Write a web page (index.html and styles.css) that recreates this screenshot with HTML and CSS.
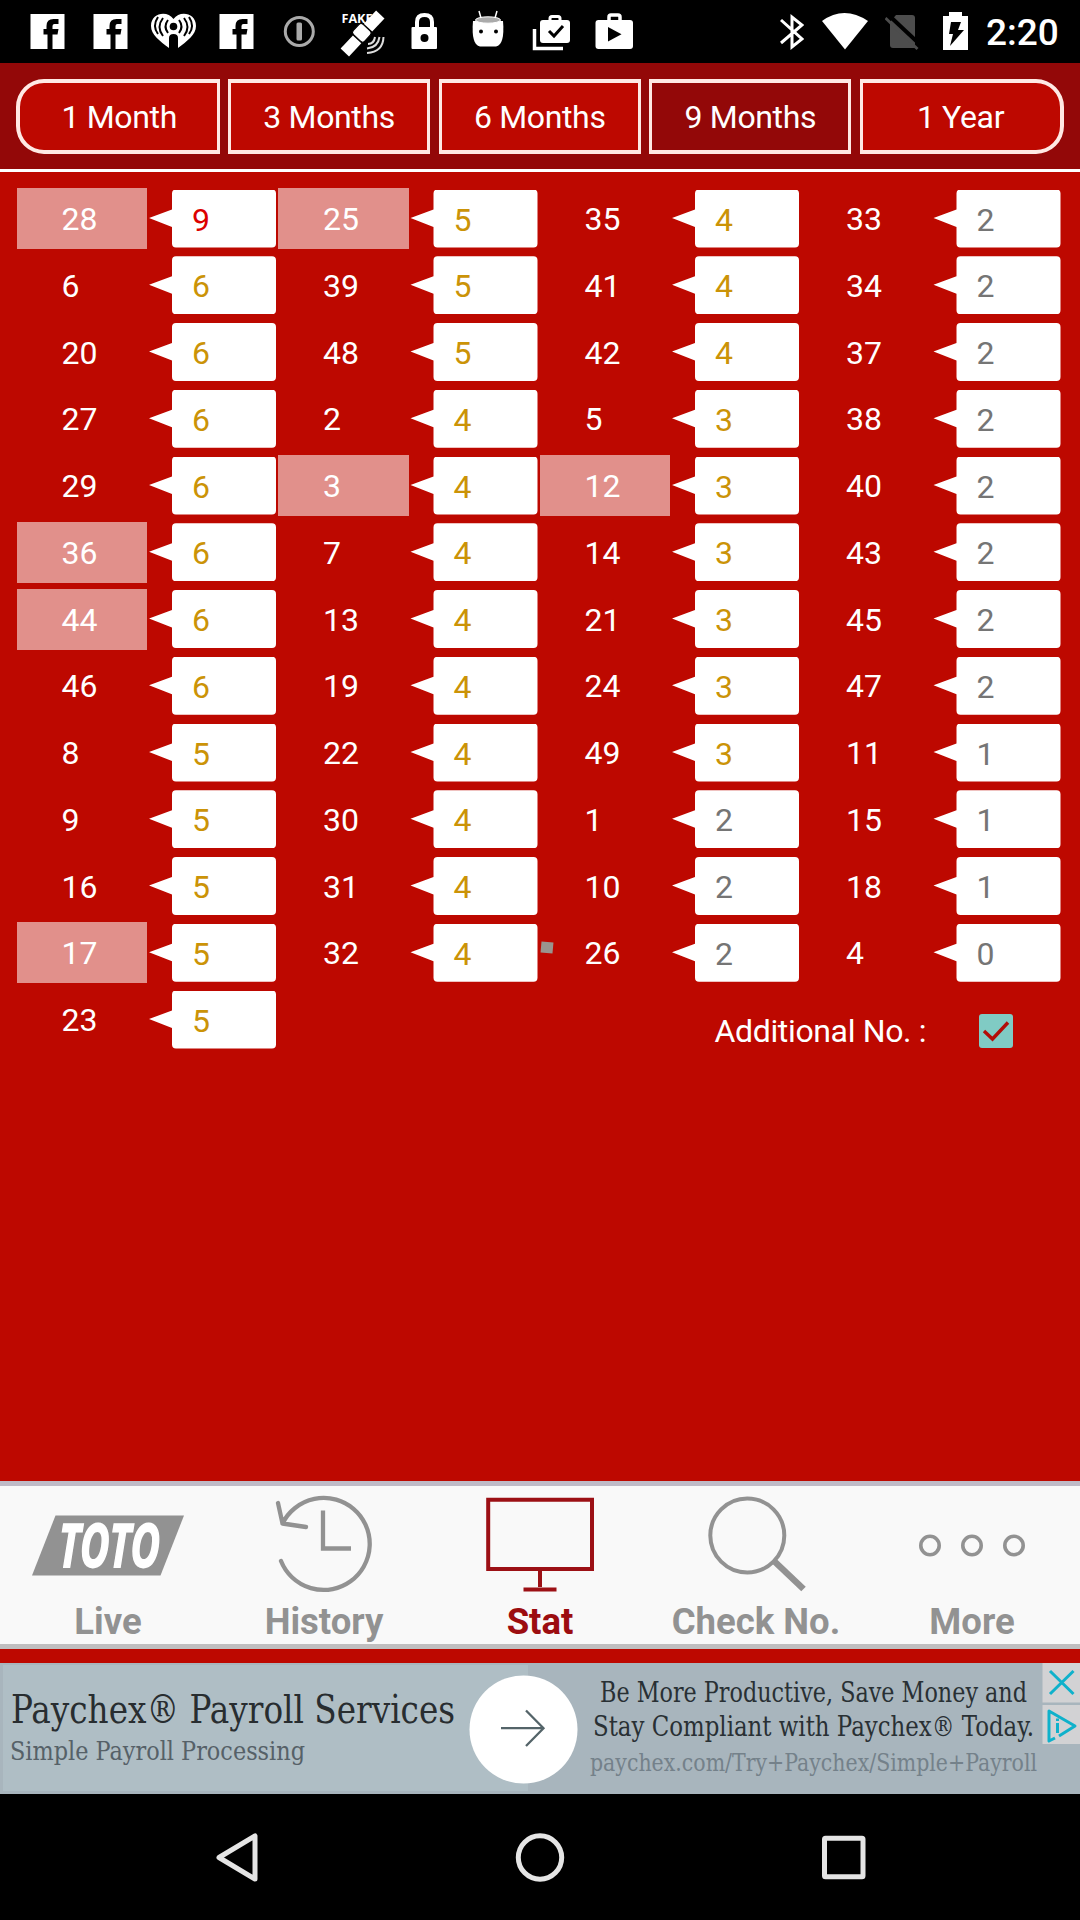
FILE: index.html
```html
<!DOCTYPE html>
<html lang="en">
<head>
<meta charset="utf-8">
<title>TOTO Statistics</title>
<link rel="stylesheet" href="styles.css">
</head>
<body>
<header class="status">
  <svg class="note" viewBox="0 0 63 63"><path fill="#fff" d="M14.500 14h34v35h-12V34.500h5l1-5.500h-6v-3q0-2 2-2h4v-5h-5q-7 0-7 7v3h-3v5.500h4V49h-17z"/></svg>
  <svg class="note" viewBox="0 0 63 63"><path fill="#fff" d="M14.500 14h34v35h-12V34.500h5l1-5.500h-6v-3q0-2 2-2h4v-5h-5q-7 0-7 7v3h-3v5.500h4V49h-17z"/></svg>
  <svg class="note" viewBox="0 0 63 63"><path fill="#fff" d="M27 48C18 41 9 35 9 26 9 13 25 10 31.500 19 38 10 54 13 54 26c0 9-9 15-18 22V38q0-4-4.500-4T27 38z"/><circle cx="31.500" cy="26.500" r="3.800"/><g fill="none" stroke="#000" stroke-width="2"><path d="M26 20q-5 6.500 0 13M21 18q-7 9 0 18M16 17q-6 9 0 17M37 20q5 6.500 0 13M42 18q7 9 0 18M47 17q6 9 0 17"/></g></svg>
  <svg class="note" viewBox="0 0 63 63"><path fill="#fff" d="M14.500 14h34v35h-12V34.500h5l1-5.500h-6v-3q0-2 2-2h4v-5h-5q-7 0-7 7v3h-3v5.500h4V49h-17z"/></svg>
  <svg class="note" viewBox="0 0 63 63"><circle cx="31.300" cy="31.500" r="14" fill="none" stroke="#aaa" stroke-width="3"/><rect x="28.500" y="22.500" width="5.500" height="18" rx="1.500" fill="#aaa"/></svg>
  <svg class="note" viewBox="0 0 63 63"><text x="10.500" y="23" class="fake" textLength="31" lengthAdjust="spacingAndGlyphs">FAKE</text><g transform="rotate(-47 31 33)" fill="#fff"><rect x="5" y="28" width="18" height="11.500"/><rect x="24" y="25" width="14" height="15.500" rx="3" stroke="#000"/><rect x="39" y="28" width="18" height="11.500"/></g><path d="M37 44q6 0 7-7M36 48.500q11-1 12.500-11.500M36 53q16-1 16.500-16" fill="none" stroke="#ddd" stroke-width="2"/></svg>
  <svg class="note" viewBox="0 0 63 63"><rect x="17.500" y="27" width="25.500" height="22" rx="1" fill="#fff"/><path d="M23 28v-6q0-7 7.500-7t7.500 7v6" fill="none" stroke="#fff" stroke-width="4"/><circle cx="30.500" cy="38" r="4"/></svg>
  <svg class="note" viewBox="0 0 63 63"><path d="M16 21h30q2 24-7 25.500H23Q14 45 16 21z" fill="#fff"/><ellipse cx="31" cy="20" rx="12.500" ry="3.200" fill="#aaa" stroke="#fff"/><path d="M22 11l2 7M40 11l-2 7" stroke="#fff" stroke-width="1.500"/><circle cx="24" cy="31.500" r="2"/><circle cx="39" cy="31.500" r="2"/></svg>
  <svg class="note" viewBox="0 0 63 63"><path d="M14.500 29v19.500H43" fill="none" stroke="#fff" stroke-width="3.500"/><rect x="20" y="20" width="30" height="23" rx="3" fill="#fff"/><path d="M30 21v-2.500q0-2 2-2h6q2 0 2 2V21" fill="none" stroke="#fff" stroke-width="3"/><path d="M29 31l5 5 9-10" fill="none" stroke="#000" stroke-width="3"/></svg>
  <svg class="note" viewBox="0 0 63 63"><rect x="12.500" y="20" width="37.500" height="29" rx="3" fill="#fff"/><path d="M26 21v-4q0-2 2-2h7q2 0 2 2v4" fill="none" stroke="#fff" stroke-width="3.500"/><path d="M25 27v14.500l13.500-7.300z"/></svg>
  <div class="system">
    <svg width="24" height="63" viewBox="0 0 24 63"><path d="M1 20l21 19-10 8V17l10 8L1 43" fill="none" stroke="#fff" stroke-width="3"/></svg>
    <svg width="46" height="63" viewBox="0 0 46 63"><path d="M0 21Q22 5 46 21L23 49.500z" fill="#fff"/></svg>
    <svg width="35" height="63" viewBox="0 0 35 63"><path d="M11 15h16q3 0 3 3v30H8q-3 0-3-3V22z" fill="#4d4d4d"/><path d="M3.500 15l33 31" stroke="#000" stroke-width="4"/><path d="M.500 18l32 31" stroke="#4d4d4d" stroke-width="2.800"/></svg>
    <svg width="25" height="63" viewBox="0 0 25 63"><path d="M0 16h6v-4h13v4h6v34H0z" fill="#fff"/><path d="M8 22h10l-3 8h6L7 46l3-12H6z"/></svg>
    <span class="clock">2:20</span>
  </div>
</header>

<nav class="periods">
  <a class="period first">1 Month</a>
  <a class="period">3 Months</a>
  <a class="period">6 Months</a>
  <a class="period active">9 Months</a>
  <a class="period last">1 Year</a>
</nav>

<main class="board">
  <div class="col tall">
    <div class="row"><span class="num hit">28</span><span class="count hot">9</span></div>
    <div class="row"><span class="num">6</span><span class="count">6</span></div>
    <div class="row"><span class="num">20</span><span class="count">6</span></div>
    <div class="row"><span class="num">27</span><span class="count">6</span></div>
    <div class="row"><span class="num">29</span><span class="count">6</span></div>
    <div class="row"><span class="num hit">36</span><span class="count">6</span></div>
    <div class="row"><span class="num hit">44</span><span class="count">6</span></div>
    <div class="row"><span class="num">46</span><span class="count">6</span></div>
    <div class="row"><span class="num">8</span><span class="count">5</span></div>
    <div class="row"><span class="num">9</span><span class="count">5</span></div>
    <div class="row"><span class="num">16</span><span class="count">5</span></div>
    <div class="row"><span class="num hit">17</span><span class="count">5</span></div>
    <div class="row"><span class="num">23</span><span class="count">5</span></div>
  </div>
  <div class="col">
    <div class="row"><span class="num hit">25</span><span class="count">5</span></div>
    <div class="row"><span class="num">39</span><span class="count">5</span></div>
    <div class="row"><span class="num">48</span><span class="count">5</span></div>
    <div class="row"><span class="num">2</span><span class="count">4</span></div>
    <div class="row"><span class="num hit">3</span><span class="count">4</span></div>
    <div class="row"><span class="num">7</span><span class="count">4</span></div>
    <div class="row"><span class="num">13</span><span class="count">4</span></div>
    <div class="row"><span class="num">19</span><span class="count">4</span></div>
    <div class="row"><span class="num">22</span><span class="count">4</span></div>
    <div class="row"><span class="num">30</span><span class="count">4</span></div>
    <div class="row"><span class="num">31</span><span class="count">4</span></div>
    <div class="row"><span class="num">32</span><span class="count">4</span></div>
  </div>
  <div class="col">
    <div class="row"><span class="num">35</span><span class="count">4</span></div>
    <div class="row"><span class="num">41</span><span class="count">4</span></div>
    <div class="row"><span class="num">42</span><span class="count">4</span></div>
    <div class="row"><span class="num">5</span><span class="count">3</span></div>
    <div class="row"><span class="num hit">12</span><span class="count">3</span></div>
    <div class="row"><span class="num">14</span><span class="count">3</span></div>
    <div class="row"><span class="num">21</span><span class="count">3</span></div>
    <div class="row"><span class="num">24</span><span class="count">3</span></div>
    <div class="row"><span class="num">49</span><span class="count">3</span></div>
    <div class="row"><span class="num">1</span><span class="count cold">2</span></div>
    <div class="row"><span class="num">10</span><span class="count cold">2</span></div>
    <div class="row"><span class="num marked">26</span><span class="count cold">2</span></div>
  </div>
  <div class="col">
    <div class="row"><span class="num">33</span><span class="count cold">2</span></div>
    <div class="row"><span class="num">34</span><span class="count cold">2</span></div>
    <div class="row"><span class="num">37</span><span class="count cold">2</span></div>
    <div class="row"><span class="num">38</span><span class="count cold">2</span></div>
    <div class="row"><span class="num">40</span><span class="count cold">2</span></div>
    <div class="row"><span class="num">43</span><span class="count cold">2</span></div>
    <div class="row"><span class="num">45</span><span class="count cold">2</span></div>
    <div class="row"><span class="num">47</span><span class="count cold">2</span></div>
    <div class="row"><span class="num">11</span><span class="count cold">1</span></div>
    <div class="row"><span class="num">15</span><span class="count cold">1</span></div>
    <div class="row"><span class="num">18</span><span class="count cold">1</span></div>
    <div class="row"><span class="num">4</span><span class="count cold">0</span></div>
  </div>
  <label class="additional">
    <span>Additional No. :</span>
    <svg width="34" height="34" viewBox="0 0 34 34"><rect width="34" height="34" rx="3" fill="#80cbc4"/><path d="M5 17l8.500 8L29 8.500" fill="none" stroke="#b30d08" stroke-width="3.400"/></svg>
  </label>
</main>

<nav class="tabs">
  <a class="tab">
    <svg width="216" height="110" viewBox="0 0 216 110"><path d="M55.500 28.500H184L160.500 88.500H32z" fill="#929292"/><g transform="translate(58.500 80) skewX(-1)"><text class="toto" textLength="101" lengthAdjust="spacingAndGlyphs">TOTO</text></g></svg>
    <span>Live</span>
  </a>
  <a class="tab">
    <svg width="216" height="110" viewBox="0 0 216 110"><g fill="none" stroke="#929292" stroke-width="4.300"><path stroke-linecap="round" stroke-linejoin="round" d="M62 16l4.500 20.500L90 40M66.500 36.500A46 46 0 1 1 65 74"/><path d="M107 23.500v38h28"/></g></svg>
    <span>History</span>
  </a>
  <a class="tab active">
    <svg width="216" height="110" viewBox="0 0 216 110"><g fill="none" stroke="#9c1015" stroke-width="4"><path d="M56.200 12.700H160V82H56.200zM108 82v18M91.500 102.500h33"/></g></svg>
    <span>Stat</span>
  </a>
  <a class="tab">
    <svg width="216" height="110" viewBox="0 0 216 110"><circle cx="99.300" cy="48.500" r="37" fill="none" stroke="#929292" stroke-width="4"/><path d="M126 74l29.500 28" stroke="#929292" stroke-width="6.500"/></svg>
    <span>Check No.</span>
  </a>
  <a class="tab">
    <svg width="216" height="110" viewBox="0 0 216 110"><g fill="none" stroke="#929292" stroke-width="3.600"><circle cx="66" cy="58.500" r="9.200"/><circle cx="108" cy="58.500" r="9.200"/><circle cx="150" cy="58.500" r="9.200"/></g></svg>
    <span>More</span>
  </a>
</nav>

<aside class="ad">
  <svg width="1080" height="131" viewBox="0 0 1080 131">
    <rect width="1080" height="131" fill="#a8b5bd"/>
    <rect x="3" y="2" width="525" height="126" fill="#afbec5"/>
    <circle cx="523.500" cy="66.500" r="54" fill="#fff"/>
    <path d="M501 65.200h42M526 47.500l17.500 17.700L526 83" fill="none" stroke="#546469" stroke-width="2.300"/>
    <text class="ad-title" x="11" y="60" textLength="444" lengthAdjust="spacingAndGlyphs">Paychex® Payroll Services</text>
    <text class="ad-sub" x="10" y="96.500" textLength="295" lengthAdjust="spacingAndGlyphs">Simple Payroll Processing</text>
    <text class="ad-copy" x="600" y="39" textLength="427" lengthAdjust="spacingAndGlyphs">Be More Productive, Save Money and</text>
    <text class="ad-copy" x="593" y="73" textLength="441" lengthAdjust="spacingAndGlyphs">Stay Compliant with Paychex® Today.</text>
    <text class="ad-link" x="590" y="107.500" textLength="447" lengthAdjust="spacingAndGlyphs">paychex.com/Try+Paychex/Simple+Payroll</text>
    <path d="M1042.500 0h37.500v39.500h-37.500zM1042.500 42h37.500v39h-37.500z" fill="#d2d2d4"/>
    <g fill="none" stroke="#0fb1cb" stroke-width="3"><path d="M1050 8l23.500 23M1073.500 8L1050 31"/><path stroke-linejoin="round" d="M1055 75l-6 3V48l26 15-16 10M1057.500 60v10"/><path d="M1057.500 55.500v2.500"/></g>
  </svg>
</aside>

<footer class="system-nav">
  <svg viewBox="0 0 60 60"><path d="M37 8v43L1 29.500z" fill="none" stroke="#e5e5e5" stroke-width="5" stroke-linejoin="round"/></svg>
  <svg viewBox="0 0 60 60"><circle cx="24" cy="29.500" r="21.700" fill="none" stroke="#e5e5e5" stroke-width="5"/></svg>
  <svg viewBox="0 0 60 60"><rect x="10.500" y="10.300" width="38.500" height="38.500" rx="1" fill="none" stroke="#e5e5e5" stroke-width="5"/></svg>
</footer>
</body>
</html>
```
FILE: styles.css
```css
* { box-sizing: border-box; }

body {
  margin: 0;
  width: 1080px;
  height: 1920px;
  display: flex;
  flex-direction: column;
  overflow: hidden;
  background: #bd0800;
  color: #fff;
  font-family: Roboto, sans-serif;
  font-size: 32px;
}

svg { display: block; flex: none; }

/* status bar */
.status {
  height: 63px;
  padding-left: 16px;
  display: flex;
  background: #000;
}
.note { width: 63px; height: 63px; }
.fake { font: bold 13px "Open Sans", sans-serif; fill: #fff; }
.system { flex: 1; display: flex; padding-left: 134px; }
.system svg:nth-child(2) { margin-left: 18px; }
.system svg:nth-child(3) { margin-left: 17px; }
.system svg:nth-child(4) { margin-left: 23px; }
.clock {
  margin-left: 18px;
  font-size: 37px;
  font-weight: 500;
  line-height: 66px;
}

/* period selector */
.periods {
  height: 109px;
  flex: none;
  padding: 15.500px 16px 0;
  display: grid;
  grid-template-columns: 203.500px 202px 202px 202px 204px;
  justify-content: space-between;
  background: #930808;
  border-bottom: 3px solid #fff;
}
.period {
  height: 75px;
  border: 4px solid #ffe9e4;
  border-left-width: 3px;
  border-right-width: 3px;
  background: #bd0800;
  line-height: 68px;
  letter-spacing: -0.350px;
  text-align: center;
}
.period.first { border-radius: 28px 0 0 28px; border-left-width: 4px; padding-left: 2px; }
.period.last { border-radius: 0 28px 28px 0; border-right-width: 4px; padding-right: 2px; }
.period.active { background: #930808; }

/* frequency board */
.board {
  height: 1309px;
  flex: none;
  padding: 16px 0 0 16.500px;
  display: grid;
  grid-template-columns: repeat(4, 261.500px);
  grid-template-rows: 801px 1fr;
}
.col { display: flex; flex-direction: column; gap: 5.750px; }
.col.tall { grid-row: 1 / 3; }
.row { height: 61px; flex: none; display: flex; align-items: center; }
.num {
  position: relative;
  width: 130.500px;
  height: 61px;
  padding-left: 45px;
  line-height: 63px;
}
.hit { background: #e1908b; }
.marked::before {
  content: "";
  position: absolute;
  left: 1px;
  top: 20px;
  width: 12px;
  height: 11px;
  background: #9a948e;
  transform: rotate(5deg);
}
.count {
  width: 129px;
  height: 58px;
  padding-left: 45px;
  background: #fff;
  clip-path: path("M29 0H125Q129 0 129 4V54Q129 58 125 58H29Q25 58 25 54V37.500L2 28.500L25 20V4Q25 0 29 0Z");
  color: #cb9307;
  line-height: 60px;
}
.count.hot { color: #dc0000; }
.count.cold { color: #757575; }

.additional {
  grid-column: 3 / 5;
  grid-row: 2;
  display: flex;
  height: 34px;
  margin: 25px 0 0 175px;
  align-items: center;
  justify-content: space-between;
  width: 298px;
  line-height: 34px;
  letter-spacing: -0.350px;
}

/* app tabs */
.tabs {
  height: 168px;
  flex: none;
  display: grid;
  grid-template-columns: repeat(5, 216px);
  background: #f9f9f9;
  border-top: 5px solid #bfbbc7;
  border-bottom: 5px solid #c0bfc0;
}
.tab {
  padding-top: 1px;
  color: #929292;
  font-size: 36.500px;
  font-weight: 700;
  text-align: center;
}
.tab span { display: block; margin-top: 2px; line-height: 45px; }
.tab.active { color: #9c0d10; }
.toto {
  font: italic bold 60px "Open Sans", sans-serif;
  fill: #fff;
  stroke: #fff;
  stroke-width: 1.800px;
}

/* banner */
.ad { height: 131px; flex: none; margin-top: 14px; }
.ad text { font-family: "DejaVu Serif Condensed", "DejaVu Serif", serif; }
.ad .ad-title { font-size: 39px; fill: #282d30; }
.ad .ad-sub { font-size: 26px; fill: #566168; }
.ad .ad-copy { font-size: 27px; fill: #293034; }
.ad .ad-link { font-size: 24px; fill: #74818a; }

/* system navigation */
.system-nav {
  flex: 1;
  padding: 34px 206px 0 218px;
  display: flex;
  justify-content: space-between;
  background: #000;
}
.system-nav svg { width: 60px; height: 60px; overflow: visible; }
```
